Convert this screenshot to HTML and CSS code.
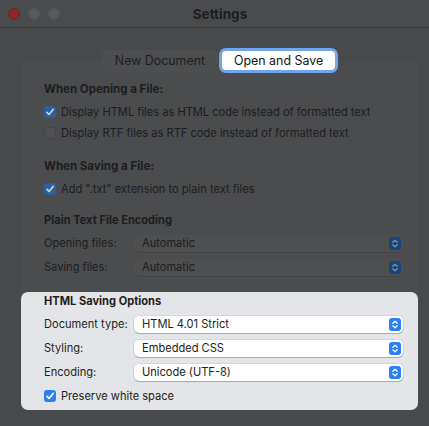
FILE: index.html
```html
<!DOCTYPE html>
<html>
<head>
<meta charset="utf-8">
<link rel="stylesheet" href="styles.css">
</head>
<body>
<div class="window">
  <div class="titlebar">
    <div class="lights">
      <span class="light red"></span>
      <span class="light gray"></span>
      <span class="light gray"></span>
    </div>
    <div class="title">Settings</div>
    <div></div>
  </div>

  <div class="tabs">
    <div class="seg">New Document</div>
    <div class="seg seg-on">Open and Save</div>
  </div>

  <div class="tabbox">
    <div class="dim-section">
      <div class="head h-first">When Opening a File:</div>
      <div class="check-row r-first">
        <span class="cb cb-on dim"><svg viewBox="0 0 12 12"><path d="M3 6.3 L5.1 8.5 L9.2 3.4"/></svg></span>
        <span class="lbl">Display HTML files as HTML code instead of formatted text</span>
      </div>
      <div class="check-row">
        <span class="cb cb-off dim"></span>
        <span class="lbl">Display RTF files as RTF code instead of formatted text</span>
      </div>

      <div class="head h-next">When Saving a File:</div>
      <div class="check-row r-first">
        <span class="cb cb-on dim"><svg viewBox="0 0 12 12"><path d="M3 6.3 L5.1 8.5 L9.2 3.4"/></svg></span>
        <span class="lbl">Add ".txt" extension to plain text files</span>
      </div>

      <div class="head h-enc">Plain Text File Encoding</div>
      <div class="pop-row p-first">
        <span class="plabel">Opening files:</span>
        <div class="popup dim"><span class="pval">Automatic</span><span class="stepper"><svg viewBox="0 0 12 13"><path d="M3.8 5.2 L6 3.2 L8.2 5.2 M3.8 7.8 L6 9.8 L8.2 7.8"/></svg></span></div>
      </div>
      <div class="pop-row">
        <span class="plabel">Saving files:</span>
        <div class="popup dim"><span class="pval">Automatic</span><span class="stepper"><svg viewBox="0 0 12 13"><path d="M3.8 5.2 L6 3.2 L8.2 5.2 M3.8 7.8 L6 9.8 L8.2 7.8"/></svg></span></div>
      </div>
    </div>

    <div class="hl-section">
      <div class="head h-hl">HTML Saving Options</div>
      <div class="pop-row p-first">
        <span class="plabel">Document type:</span>
        <div class="popup lit"><span class="pval">HTML 4.01 Strict</span><span class="stepper"><svg viewBox="0 0 12 13"><path d="M3.8 5.2 L6 3.2 L8.2 5.2 M3.8 7.8 L6 9.8 L8.2 7.8"/></svg></span></div>
      </div>
      <div class="pop-row">
        <span class="plabel">Styling:</span>
        <div class="popup lit"><span class="pval">Embedded CSS</span><span class="stepper"><svg viewBox="0 0 12 13"><path d="M3.8 5.2 L6 3.2 L8.2 5.2 M3.8 7.8 L6 9.8 L8.2 7.8"/></svg></span></div>
      </div>
      <div class="pop-row">
        <span class="plabel">Encoding:</span>
        <div class="popup lit"><span class="pval">Unicode (UTF-8)</span><span class="stepper"><svg viewBox="0 0 12 13"><path d="M3.8 5.2 L6 3.2 L8.2 5.2 M3.8 7.8 L6 9.8 L8.2 7.8"/></svg></span></div>
      </div>
      <div class="check-row r-hl">
        <span class="cb cb-on lit"><svg viewBox="0 0 12 12"><path d="M3 6.3 L5.1 8.5 L9.2 3.4"/></svg></span>
        <span class="lbl">Preserve white space</span>
      </div>
    </div>
  </div>
</div>
</body>
</html>
```
FILE: styles.css
```css
html, body {
  margin: 0;
  padding: 0;
}
body {
  width: 429px;
  height: 426px;
  overflow: hidden;
  background: #48494b;
  font-family: "Inter", "Liberation Sans", sans-serif;
  font-size: 11.1px;
  color: #1b1c1e;
}
.window {
  width: 440px;
  height: 426px;
  background: #48494b;
}
.titlebar {
  height: 28px;
  border-bottom: 1px solid #3b3c3e;
  box-sizing: border-box;
  display: grid;
  grid-template-columns: 1fr auto 1fr;
  align-items: center;
  background: #4a4b4d;
}
.lights {
  display: flex;
  gap: 8px;
  padding-left: 8px;
}
.light {
  width: 12px;
  height: 12px;
  border-radius: 50%;
  box-sizing: border-box;
}
.light.red {
  background: #872a29;
  border: 0.5px solid #6e2020;
}
.light.gray {
  background: #58595b;
  border: 0.5px solid #515254;
}
.title {
  font-weight: 700;
  font-size: 13.5px;
  color: #1c1d1f;
}

.tabs {
  display: flex;
  justify-content: center;
  align-items: center;
  gap: 1px;
  margin-top: 20px;
  height: 25px;
  position: relative;
  z-index: 1;
}
.seg {
  height: 22px;
  line-height: 22px;
  padding: 0 13px;
  border-radius: 5px;
  background: #4d4e50;
  font-size: 12.4px;
  color: #1d1e20;
  box-sizing: border-box;
}
.seg-on {
  height: 25px;
  line-height: 19px;
  padding: 0 12px;
  border: 3px solid #73a5ec;
  border-radius: 7px;
  background: #ffffff;
  color: #111;
}

.tabbox {
  margin-top: -11px;
  margin-left: 22px;
  width: 396px;
  height: 348px;
  background: #4b4c4e;
  border-radius: 6px;
  box-sizing: border-box;
  padding-top: 19px;
}
.dim-section {
  padding: 0 0 0 22px;
}
.head {
  height: 16px;
  line-height: 16px;
  font-weight: 700;
}
.h-first, .h-next { font-size: 11.5px; }
.h-next { margin-top: 15px; }
.h-enc { margin-top: 13px; }
.check-row {
  display: flex;
  align-items: center;
  height: 21px;
  gap: 5px;
}
.r-first { margin-top: 4px; }
.r-hl { margin-top: 1px; }
.cb {
  width: 12px;
  height: 12px;
  border-radius: 3px;
  box-sizing: border-box;
  flex: none;
  display: flex;
}
.cb svg {
  width: 12px;
  height: 12px;
}
.cb svg path {
  fill: none;
  stroke-width: 1.7;
  stroke-linecap: round;
  stroke-linejoin: round;
}
.cb-on.dim {
  background: #2b5f9e;
}
.cb-on.dim svg path { stroke: #c6d0da; }
.cb-off.dim {
  background: #4f5052;
  border: 0.5px solid #434446;
}
.cb-on.lit {
  background: #2a80f3;
}
.cb-on.lit svg path { stroke: #ffffff; }

.pop-row {
  display: flex;
  align-items: center;
  height: 24px;
}
.p-first { margin-top: 3px; }
.plabel {
  width: 90px;
  flex: none;
}
.popup {
  width: 269px;
  flex: none;
  height: 17px;
  border-radius: 5px;
  box-sizing: border-box;
  display: flex;
  align-items: center;
  justify-content: space-between;
  padding: 0 2px 0 8px;
}
.popup.dim {
  background: #4e4f51;
  box-shadow: 0 0.5px 0 #3c3d3f;
}
.popup.lit {
  background: #ffffff;
  box-shadow: 0 0 0 0.5px rgba(0,0,0,0.12), 0 1px 1px rgba(0,0,0,0.22);
  color: #222;
}
.stepper {
  width: 12px;
  height: 13px;
  border-radius: 3px;
  display: flex;
}
.stepper svg {
  width: 12px;
  height: 13px;
}
.stepper svg path {
  fill: none;
  stroke-width: 1.3;
  stroke-linecap: round;
  stroke-linejoin: round;
}
.popup.dim .stepper { background: #1b4476; }
.popup.dim .stepper svg path { stroke: #7e93ad; }
.popup.lit .stepper { background: #2a80f3; }
.popup.lit .stepper svg path { stroke: #ffffff; }

.hl-section {
  margin-top: 13px;
  margin-left: -1px;
  width: 397px;
  background: #e4e5e9;
  border-radius: 7px;
  padding: 1px 0 4px 23px;
  box-sizing: border-box;
  color: #1f1f21;
}
```
